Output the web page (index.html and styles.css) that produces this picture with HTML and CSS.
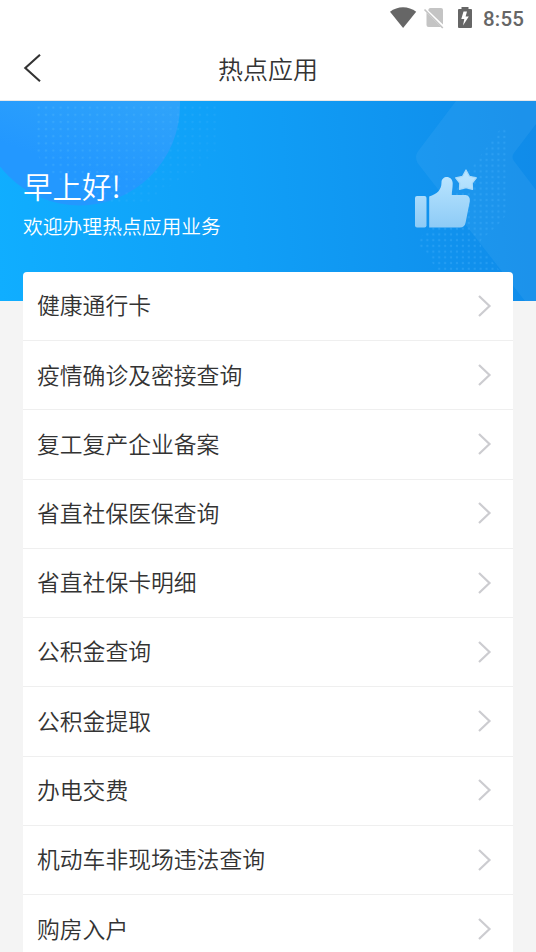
FILE: index.html
```html
<!DOCTYPE html>
<html lang="zh-CN">
<head>
<meta charset="utf-8">
<title>热点应用</title>
<link rel="stylesheet" href="styles.css">
</head>
<body>
<header class="top">
  <div class="status">
    <svg class="status-icons" width="84" height="24" viewBox="0 0 84 24">
      <path d="M0 6.800C7.500.8 18.500.8 26.200 6.800L13.100 23Z" fill="#666"/>
      <path d="M38.300 5.500L38.600 4Q39.300 3 40.500 3H51Q53 3 53 5V19.500ZM36.500 7.500L51 22H38.500Q36.500 22 36.500 20Z" fill="#c4c4c4"/>
      <path d="M34.500 4.500L52.800 23" stroke="#c4c4c4" stroke-width="1.700" fill="none"/>
      <path d="M71.500 2h7v2H81q1 0 1 1v17q0 1-1 1H69q-1 0-1-1V5q0-1 1-1h2.500Z" fill="#666"/>
      <path d="M77 6.500H73.500L71.300 14H74.300L73 20.500L78.800 11.500H75.600Z" fill="#fff"/>
    </svg>
    <span class="time">8:55</span>
  </div>
  <div class="nav">
    <svg class="back" width="18" height="28" viewBox="0 0 18 28"><path d="M17 .8L2.300 14L17 27.200" fill="none" stroke="#333" stroke-width="2.100"/></svg>
    <h1>热点应用</h1>
  </div>
</header>
<section class="hero">
  <svg class="hero-art" width="536" height="200" viewBox="0 101 536 200">
    <defs>
      <linearGradient id="circle" x1=".65" y1=".4" x2=".45" y2="1"><stop offset="0" stop-color="#2fa3fa"/><stop offset=".7" stop-color="#2398ff"/><stop offset="1" stop-color="#2398ff"/></linearGradient>
      <linearGradient id="thumb" gradientUnits="userSpaceOnUse" x1="0" y1="176" x2="0" y2="228"><stop offset="0" stop-color="#bae5ff"/><stop offset="1" stop-color="#8dcbf6"/></linearGradient>
      <pattern id="dots-left" width="7.330" height="7.150" patternUnits="userSpaceOnUse" x="35" y="104"><circle cx="3.660" cy="3.600" r="1.250" fill="#54bafa"/></pattern>
      <pattern id="dots-right" width="5.920" height="5.730" patternUnits="userSpaceOnUse" x="418.500" y="128.400"><circle cx="2.950" cy="2.850" r="1.150" fill="#45b0fb"/></pattern>
      <linearGradient id="fade" x1="0" y1="0" x2="1" y2=".6"><stop offset="0" stop-color="#fff"/><stop offset=".5" stop-color="#bbb"/><stop offset="1" stop-color="#333"/></linearGradient>
      <mask id="dot-mask"><rect x="30" y="101" width="190" height="110" fill="url(#fade)"/></mask>
    </defs>
    <circle cx="79.500" cy="105" r="100.500" fill="url(#circle)"/>
    <path d="M35 104H218V150L200 169L174 183L145 205H108L64 183L43 168L35 147Z" fill="url(#dots-left)" opacity=".38" mask="url(#dot-mask)"/>
    <path d="M456 101H536V124L514 153Q511 157 514 161L536 190V301H525L417.500 163Q414.500 157 417.500 152Z" fill="#51b4f4" opacity=".18"/>
    <path d="M501 128H507V214L497 226L481 240V247L499 270H436L427 253L418.500 247V239L442 216L462 180L484 151Z" fill="url(#dots-right)" opacity=".38"/>
    <g fill="url(#thumb)">
      <rect x="415" y="196" width="11.500" height="31.500" rx="2"/>
      <path d="M429.200 227.500V196.500C437 194 441.500 190 441.500 182.500C441.500 175 452.700 175 452.700 183.500C452.700 188.500 451.800 191 451.800 195H465.500Q470.400 195.500 469.800 201.500L465.600 222.500Q464.600 227.500 460 227.500Z"/>
      <path d="M466 170L469.400 176.300L476.300 177.800L472.200 183.200L472.500 189.300L466 187.500L459.500 189.300L459.800 183.200L455.700 177.800L462.600 176.300Z" stroke="#a9dafa" stroke-width="1.300" stroke-linejoin="round"/>
    </g>
  </svg>
  <h2>早上好!</h2>
  <p>欢迎办理热点应用业务</p>
</section>
<ul class="card">
  <li>健康通行卡<svg width="16" height="24" viewBox="0 0 16 24"><path d="M2 2L12.500 12L2 22"/></svg></li>
  <li>疫情确诊及密接查询<svg width="16" height="24" viewBox="0 0 16 24"><path d="M2 2L12.500 12L2 22"/></svg></li>
  <li>复工复产企业备案<svg width="16" height="24" viewBox="0 0 16 24"><path d="M2 2L12.500 12L2 22"/></svg></li>
  <li>省直社保医保查询<svg width="16" height="24" viewBox="0 0 16 24"><path d="M2 2L12.500 12L2 22"/></svg></li>
  <li>省直社保卡明细<svg width="16" height="24" viewBox="0 0 16 24"><path d="M2 2L12.500 12L2 22"/></svg></li>
  <li>公积金查询<svg width="16" height="24" viewBox="0 0 16 24"><path d="M2 2L12.500 12L2 22"/></svg></li>
  <li>公积金提取<svg width="16" height="24" viewBox="0 0 16 24"><path d="M2 2L12.500 12L2 22"/></svg></li>
  <li>办电交费<svg width="16" height="24" viewBox="0 0 16 24"><path d="M2 2L12.500 12L2 22"/></svg></li>
  <li>机动车非现场违法查询<svg width="16" height="24" viewBox="0 0 16 24"><path d="M2 2L12.500 12L2 22"/></svg></li>
  <li>购房入户<svg width="16" height="24" viewBox="0 0 16 24"><path d="M2 2L12.500 12L2 22"/></svg></li>
</ul>
</body>
</html>
```
FILE: styles.css
```css
* { box-sizing: border-box; }
html { height: 952px; overflow: hidden; }
body {
  margin: 0;
  height: 952px;
  overflow: hidden;
  background: #f4f4f4;
  color: #333;
  font-family: "Noto Sans CJK SC", sans-serif;
  font-weight: 350;
}
h1, h2, p, ul { margin: 0; padding: 0; font-weight: 350; }
.top { height: 101px; background: #fff; border-bottom: 1px solid #e8e8e8; }
.status {
  height: 37px;
  padding: 5px 12px 0 0;
  display: flex;
  justify-content: flex-end;
  align-items: flex-start;
}
.status-icons { width: 84px; height: 24px; margin-right: 9px; }
.time {
  width: 41px;
  font: 500 20.500px/28px Roboto, sans-serif;
  letter-spacing: .2px;
  white-space: nowrap;
  color: #666;
}
.nav {
  height: 62px;
  padding: 0 23px;
  display: grid;
  grid-template-columns: 18px 1fr 18px;
  align-items: center;
}
h1 { font-size: 25px; line-height: 36px; text-align: center; margin-top: -1px; }
.hero {
  position: relative;
  height: 200px;
  padding: 63px 23px 0;
  color: #fff;
  background: linear-gradient(86deg, #10aeff 0%, #109ff7 45%, #108be9 100%);
}
.hero-art { position: absolute; left: 0; top: 0; }
.hero h2, .hero p { position: relative; }
.hero h2 { font-size: 29.500px; line-height: 42px; }
.hero p { font-size: 19.800px; line-height: 30px; margin-top: 5px; }
.card {
  position: relative;
  margin: -29px 23px 0;
  border-radius: 4px;
  background: #fff;
  list-style: none;
}
.card li {
  height: 69.230px;
  padding: 0 20px 1.600px 14px;
  display: flex;
  justify-content: space-between;
  align-items: center;
  border-bottom: 1px solid #efefef;
  font-size: 22.800px;
  line-height: 34px;
}
.card li:last-child { border-bottom: 0; }
.card svg { margin-top: 1px; fill: none; stroke: #ccccd0; stroke-width: 2.200; }
```
